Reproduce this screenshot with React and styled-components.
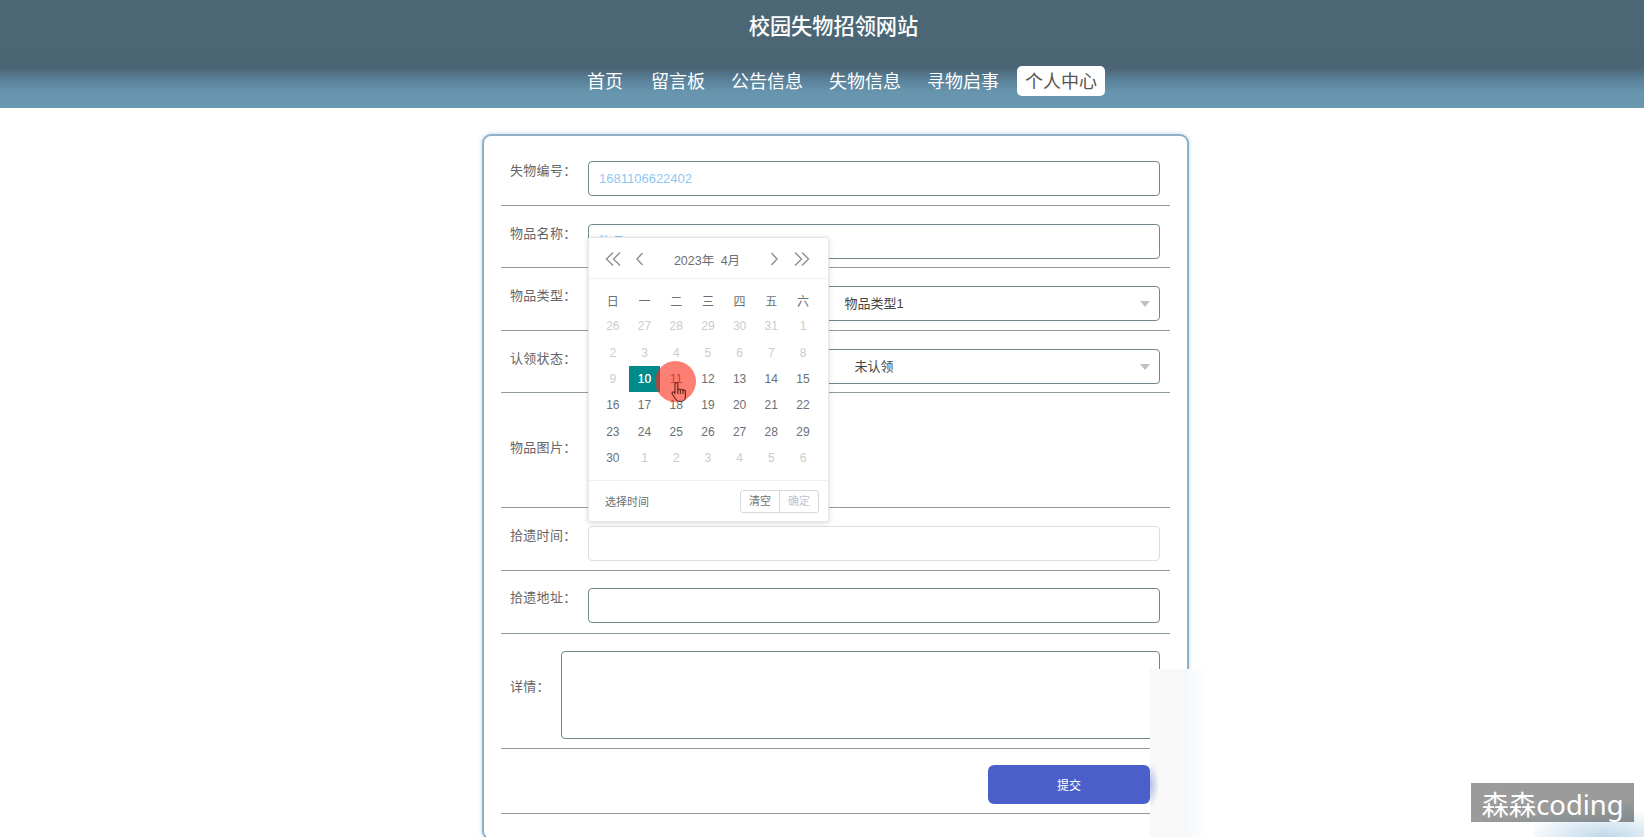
import React from "react";
import styled, { createGlobalStyle } from "styled-components";

const FONT = `"Liberation Sans", "Noto Sans CJK SC", sans-serif`;

const Global = createGlobalStyle`
  html, body { margin: 0; padding: 0; background: #fff; height: 837px; overflow: hidden; }
  body { font-family: ${FONT}; position: relative; }
  * { box-sizing: border-box; }
`;

const Header = styled.header`
  height: 108px;
  background: linear-gradient(to bottom, #4c6775 0, #4b6575 68px, #5a8199 80px, #6795ae 92px, #6a97b0 108px);
  display: flex;
  flex-direction: column;
  align-items: center;
  color: #fff;
`;
const Title = styled.h1`
  margin: 14px 0 0;
  padding-left: 23px;
  font-size: 21.2px;
  line-height: 26px;
  font-weight: 500;
`;
const Nav = styled.nav`
  display: flex;
  align-items: center;
  gap: 10px;
  margin-top: 26px;
  padding-left: 40px;
`;
const NavItem = styled.a`
  height: 30px;
  line-height: 32px;
  padding: 0 8px;
  font-size: 18px;
  border-radius: 5px;
  color: ${(p) => (p.$active ? "#555" : "#fff")};
  background: ${(p) => (p.$active ? "#fff" : "transparent")};
  margin-left: ${(p) => p.$shift || 0}px;
`;

const Main = styled.main`
  display: flex;
  justify-content: center;
  padding: 26px 0 0 27px;
`;
const Card = styled.form`
  flex: none;
  width: 707px;
  height: 706px;
  padding: 7px 17px 0;
  background: #fff;
  border: 2px solid #8fb1c6;
  border-radius: 9px;
  box-shadow: 0 0 4px rgba(110, 160, 200, 0.45);
`;
const Row = styled.div`
  display: flex;
  align-items: center;
  height: ${(p) => p.$h || 62.6}px;
  padding: ${(p) => p.$top || 18}px 10px 8px 9px;
  border-bottom: 1px solid #8d9b9c;
`;
const Label = styled.label`
  flex: none;
  width: ${(p) => p.$w || 78}px;
  margin-top: -18px;
  font-size: 13px;
  letter-spacing: 0.3px;
  color: #666;
  white-space: nowrap;
`;
const Field = styled.div`
  position: relative;
  flex: 1;
`;
const Input = styled.div`
  height: 35px;
  line-height: 34px;
  padding-left: 10px;
  font-size: 13px;
  color: #90c8f2;
  border: 1px solid ${(p) => (p.$light ? "#dcdfe0" : "#70878c")};
  border-radius: 4px;
  background: #fff;
`;
const Select = styled(Input)`
  position: relative;
  padding: 0;
  text-align: center;
  color: #444;
`;
const Caret = styled.span`
  position: absolute;
  right: 9px;
  top: 14px;
  border-left: 5px solid transparent;
  border-right: 5px solid transparent;
  border-top: 6px solid #c0c0c0;
`;
const Textarea = styled(Input)`
  height: 88px;
`;
const ButtonRow = styled(Row)`
  justify-content: flex-end;
  padding: 16px 20px 8px 0;
`;
const Submit = styled.button`
  width: 162px;
  height: 39px;
  border: 0;
  border-radius: 6px;
  background: #4a5fc9;
  color: #fff;
  font: 12px ${FONT};
`;

const Calendar = styled.div`
  position: absolute;
  top: 13px;
  left: 0;
  width: 241px;
  height: 285px;
  background: #fff;
  border: 1px solid #e4e7ed;
  border-radius: 2px;
  box-shadow: 0 1px 5px rgba(0, 0, 0, 0.16);
  z-index: 2;
  color: #6c6f73;
`;
const CalHead = styled.div`
  display: flex;
  align-items: center;
  height: 41px;
  padding: 3px 18px 0 16px;
  border-bottom: 1px solid #eff1f3;
`;
const CalTitle = styled.div`
  flex: 1;
  text-align: center;
  font-size: 12.5px;
  word-spacing: 3px;
`;
const Arrow = styled.svg`
  flex: none;
  width: ${(p) => p.$w}px;
  height: 16px;
  fill: none;
  stroke: #939393;
  stroke-width: 1.5;
  margin-right: ${(p) => p.$mr || 0}px;
`;
const Grid = styled.div`
  display: grid;
  grid-template-columns: repeat(7, 31.7px);
  grid-auto-rows: 26.3px;
  padding: 8px 0 0 8px;
  height: 202px;
  border-bottom: 1px solid #eff1f3;
`;
const Cell = styled.div`
  display: flex;
  align-items: center;
  justify-content: center;
  font-size: 12px;
  color: ${(p) => (p.$off ? "#ccc" : p.$on ? "#fff" : "#6c6f73")};
  background: ${(p) => (p.$on ? "#008b8b" : "transparent")};
  text-shadow: ${(p) => (p.$on ? "0 0 0.6px #fff" : "none")};
`;
const CalFoot = styled.div`
  display: flex;
  align-items: center;
  justify-content: space-between;
  height: 40px;
  padding: 0 9px 0 16px;
  font-size: 11px;
`;
const BtnGroup = styled.div`
  display: flex;
  height: 23px;
  margin-top: 2px;
  border: 1px solid #d5d8dd;
  border-radius: 3px;
`;
const FootBtn = styled.span`
  width: ${(p) => (p.$off ? 39 : 38)}px;
  line-height: 21px;
  text-align: center;
  color: ${(p) => (p.$off ? "#c0c4cc" : "#6c6f73")};
  border-left: ${(p) => (p.$off ? "1px solid #d5d8dd" : "0")};
`;
const ClickDot = styled.div`
  position: absolute;
  left: 655px;
  top: 361px;
  width: 41px;
  height: 41px;
  border-radius: 50%;
  background: rgba(252, 40, 20, 0.6);
  z-index: 3;
`;
const Hand = styled.svg`
  position: absolute;
  left: 671px;
  top: 381px;
  width: 17px;
  height: 22px;
  z-index: 4;
`;
const Mask = styled.div`
  position: absolute;
  left: 1150px;
  top: 669px;
  right: 0;
  bottom: 0;
  z-index: 5;
  background:
    radial-gradient(ellipse 9px 22px at 0 116px, rgba(74, 95, 201, 0.4), transparent),
    linear-gradient(to right, #f8f8f8 0, #f9f9f9 22px, #f5f8fa 36px, #f9fbfc 46px, #fff 58px);
`;
const Blob = styled.div`
  position: absolute;
  right: 0;
  bottom: 0;
  width: 110px;
  height: 30px;
  z-index: 6;
  background: radial-gradient(ellipse 85px 28px at 65% 100%, #bfd8e9, rgba(255, 255, 255, 0));
`;
const Watermark = styled.div`
  position: absolute;
  left: 1471px;
  top: 783px;
  width: 163px;
  height: 39px;
  z-index: 7;
  background: linear-gradient(172deg, #9b9b9b 62%, #7f8a8f);
  color: #fff;
  font: 27.4px/44px "Noto Sans", "Noto Sans CJK SC", sans-serif;
  text-align: center;
  white-space: nowrap;
`;

const weekdays = ["日", "一", "二", "三", "四", "五", "六"];
const days = [
  [26, 1], [27, 1], [28, 1], [29, 1], [30, 1], [31, 1], [1, 1],
  [2, 1], [3, 1], [4, 1], [5, 1], [6, 1], [7, 1], [8, 1],
  [9, 1], [10, 0], [11, 0], [12, 0], [13, 0], [14, 0], [15, 0],
  [16, 0], [17, 0], [18, 0], [19, 0], [20, 0], [21, 0], [22, 0],
  [23, 0], [24, 0], [25, 0], [26, 0], [27, 0], [28, 0], [29, 0],
  [30, 0], [1, 1], [2, 1], [3, 1], [4, 1], [5, 1], [6, 1],
];

function DatePanel() {
  return (
    <Calendar>
      <CalHead>
        <Arrow $w={17} $mr={13} viewBox="0 0 17 16"><path d="M8 1.5 1.5 8 8 14.5M15 1.5 8.5 8l6.5 6.5" /></Arrow>
        <Arrow $w={9} viewBox="0 0 9 16"><path d="M7.5 2 2 8l5.5 6" /></Arrow>
        <CalTitle>2023年 4月</CalTitle>
        <Arrow $w={9} $mr={14} viewBox="0 0 9 16"><path d="M1.5 2 7 8l-5.5 6" /></Arrow>
        <Arrow $w={17} viewBox="0 0 17 16"><path d="M2 1.5 8.5 8 2 14.5M9 1.5 15.5 8 9 14.5" /></Arrow>
      </CalHead>
      <Grid>
        {weekdays.map((d) => <Cell key={d}>{d}</Cell>)}
        {days.map(([d, off], i) => <Cell key={i} $off={!!off} $on={d === 10}>{d}</Cell>)}
      </Grid>
      <CalFoot>
        <span>选择时间</span>
        <BtnGroup>
          <FootBtn>清空</FootBtn>
          <FootBtn $off>确定</FootBtn>
        </BtnGroup>
      </CalFoot>
    </Calendar>
  );
}

export default function App() {
  return (
    <>
      <Global />
      <Header>
        <Title>校园失物招领网站</Title>
        <Nav>
          <NavItem>首页</NavItem>
          <NavItem $shift={2}>留言板</NavItem>
          <NavItem>公告信息</NavItem>
          <NavItem>失物信息</NavItem>
          <NavItem>寻物启事</NavItem>
          <NavItem $active>个人中心</NavItem>
        </Nav>
      </Header>
      <Main>
        <Card>
          <Row>
            <Label>失物编号：</Label>
            <Field><Input>1681106622402</Input></Field>
          </Row>
          <Row>
            <Label>物品名称：</Label>
            <Field>
              <Input>物品</Input>
              <DatePanel />
            </Field>
          </Row>
          <Row>
            <Label>物品类型：</Label>
            <Field><Select>物品类型1<Caret /></Select></Field>
          </Row>
          <Row>
            <Label>认领状态：</Label>
            <Field><Select>未认领<Caret /></Select></Field>
          </Row>
          <Row $h={115}>
            <Label>物品图片：</Label>
          </Row>
          <Row $top={17}>
            <Label>拾遗时间：</Label>
            <Field><Input $light /></Field>
          </Row>
          <Row $top={16}>
            <Label>拾遗地址：</Label>
            <Field><Input /></Field>
          </Row>
          <Row $h={115} $top={16}>
            <Label $w={51}>详情：</Label>
            <Field><Textarea /></Field>
          </Row>
          <ButtonRow $h={65}>
            <Submit type="button">提交</Submit>
          </ButtonRow>
        </Card>
      </Main>
      <ClickDot />
      <Hand viewBox="0 0 17 22" fill="rgba(255,130,120,.55)" stroke="#6b2a22" strokeWidth="1.2" strokeLinejoin="round">
        <path d="M4 3a1.4 1.4 0 0 1 2.8 0v6.5a1.3 1.3 0 0 1 2.6 0 1.3 1.3 0 0 1 2.6.5 1.2 1.2 0 0 1 2.4.6V16c0 2.5-1.8 4.5-4.5 4.5H8.5c-2 0-3-1-4-2.5L1.3 13c-.9-1.6 1-2.8 2-1.5L4 12.5z" />
        <path d="M9.4 9.5V13M12 10v3M6.8 9.5V13" fill="none" />
      </Hand>
      <Mask />
      <Blob />
      <Watermark>森森coding</Watermark>
    </>
  );
}
